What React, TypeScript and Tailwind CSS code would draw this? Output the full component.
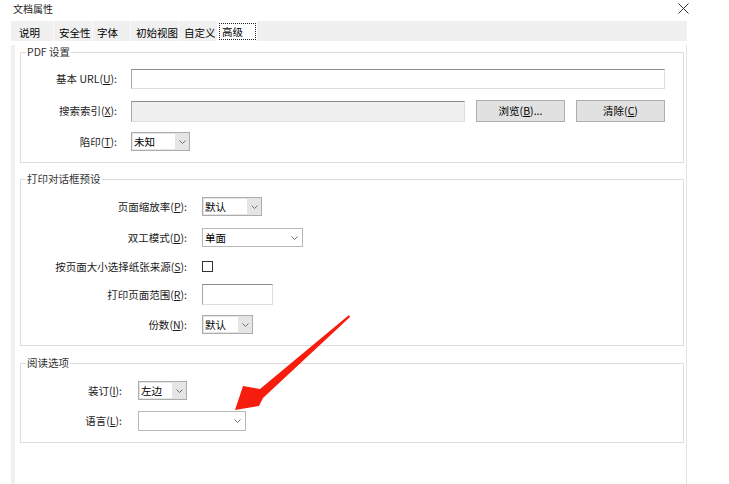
import React from "react";

const font = "font-['Noto_Sans_CJK_SC','Noto_Sans',sans-serif]";

const Chevron = () => (
  <svg width="7" height="4" viewBox="0 0 7 4" className="block">
    <path d="M0.5 0.5 L3.5 3.5 L6.5 0.5" fill="none" stroke="#707070" strokeWidth="1" />
  </svg>
);

const U = ({ c }: { c: string }) => <span className="underline underline-offset-[1px]">{c}</span>;

const Label = ({ text, k, w }: { text: string; k: string; w: string }) => (
  <div className={`${w} shrink-0 text-right text-[10.5px] leading-[14px] text-[#1a1a1a] whitespace-nowrap`}>
    {text}(<U c={k} />):
  </div>
);

const GreySelect = ({ text, cls }: { text: string; cls: string }) => (
  <div className={`${cls} flex h-[19px] border border-[#adadad] bg-[#e5e5e5]`}>
    <div className="flex-1 bg-white m-[1px] mr-0 pl-[1px] text-[10.5px] leading-[15px] text-black">{text}</div>
    <div className="w-[14px] flex items-center justify-center">
      <Chevron />
    </div>
  </div>
);

const WhiteSelect = ({ text, cls }: { text: string; cls: string }) => (
  <div className={`${cls} flex h-[19px] border border-[#b8b8b8] bg-white`}>
    <div className="flex-1 pl-[2px] text-[10.5px] leading-[17px] text-black">{text}</div>
    <div className="w-[15px] flex items-center justify-center">
      <Chevron />
    </div>
  </div>
);

const Input = ({ cls }: { cls: string }) => (
  <div className={`${cls} border border-[#dedede] border-t-[#8a8a8a] border-l-[#a8a8a8]`} />
);

const Btn = ({ text, k }: { text: string; k: string }) => (
  <div className="w-[89px] h-[22px] ml-[11px] border border-[#adadad] bg-[#e1e1e1] flex items-center justify-center text-[10.5px] leading-[14px] text-black">
    {text}(<U c={k} />){k === "B" ? "..." : ""}
  </div>
);

const Group = ({ title, children, cls }: { title: string; children: React.ReactNode; cls: string }) => (
  <fieldset className={`${cls} w-[664px] border border-[#dcdcdc] pb-[11px]`}>
    <legend className="ml-[5px] px-[1px] text-[10.5px] leading-[14px] text-[#333]">{title}</legend>
    {children}
  </fieldset>
);

export default function App() {
  const tabs = [
    { t: "说明", w: "w-[42px]", p: "pl-[8px]" },
    { t: "安全性", w: "w-[39px]", p: "pl-[5px]" },
    { t: "字体", w: "w-[38px]", p: "pl-[4px]" },
    { t: "初始视图", w: "w-[48px]", p: "pl-[5px]" },
    { t: "自定义", w: "w-[39px]", p: "pl-[5px]" },
  ];
  return (
    <div className={`${font} relative w-[729px] h-[484px] bg-white overflow-hidden`}>
      {/* title */}
      <div className="h-[21px] flex items-start justify-between pl-[13px] pr-[40px]">
        <div className="text-[10px] leading-[17px] text-[#1a1a1a]">文档属性</div>
        <svg width="11" height="11" viewBox="0 0 11 11" className="mt-[3px]">
          <path d="M0.5 0.5 L10.5 10.5 M10.5 0.5 L0.5 10.5" stroke="#333" strokeWidth="1" />
        </svg>
      </div>

      <div className="ml-[11px] w-[676px]">
        {/* tab strip */}
        <div className="h-[20px] bg-[#f0f0f0] flex">
          {tabs.map((tb, i) => (
            <div
              key={tb.t}
              className={`${tb.w} ${tb.p} h-full flex items-center pt-[3px] text-[10.5px] leading-[14px] text-black ${i > 0 ? "border-l border-[#fbfbfb]" : ""}`}
            >
              {tb.t}
            </div>
          ))}
          <div className="w-[40px] h-[21px] bg-white pl-[2px] pt-[2px]">
            <div className="w-[37px] h-[17px] border border-dotted border-[#222] pl-[2px] text-[10.5px] leading-[16px] text-black">
              高级
            </div>
          </div>
        </div>

        {/* body */}
        <div className="h-[443px] border-l-[4px] border-l-[#f0f0f0] border-r border-r-[#e3e3e3] pl-[5px]">
          <Group title="PDF 设置" cls="mt-[4px]">
            <div className="flex items-center mt-[10px] h-[20px]">
              <div className="w-[96px] shrink-0 text-right text-[10.5px] leading-[14px] text-[#1a1a1a] whitespace-nowrap">
                基本 URL(<U c="U" />):
              </div>
              <Input cls="ml-[14px] w-[534px] h-[20px] bg-white" />
            </div>
            <div className="flex items-center mt-[11px] h-[22px]">
              <Label text="搜索索引" k="X" w="w-[96px]" />
              <Input cls="ml-[14px] w-[334px] h-[21px] bg-[#f0f0f0]" />
              <Btn text="浏览" k="B" />
              <Btn text="清除" k="C" />
            </div>
            <div className="flex items-center mt-[10px] h-[19px]">
              <Label text="陷印" k="T" w="w-[96px]" />
              <GreySelect text="未知" cls="ml-[14px] w-[59px]" />
            </div>
          </Group>

          <Group title="打印对话框预设" cls="mt-[9px]">
            <div className="flex items-center mt-[11px] h-[19px]">
              <Label text="页面缩放率" k="P" w="w-[166px]" />
              <GreySelect text="默认" cls="ml-[15px] w-[60px]" />
            </div>
            <div className="flex items-center mt-[12px] h-[19px]">
              <Label text="双工模式" k="D" w="w-[166px]" />
              <WhiteSelect text="单面" cls="ml-[15px] w-[101px]" />
            </div>
            <div className="flex items-center mt-[13px] h-[13px]">
              <Label text="按页面大小选择纸张来源" k="S" w="w-[166px]" />
              <div className="ml-[15px] w-[11px] h-[11px] border border-[#333] bg-white" />
            </div>
            <div className="flex items-center mt-[11px] h-[21px]">
              <Label text="打印页面范围" k="R" w="w-[166px]" />
              <Input cls="ml-[15px] w-[71px] h-[21px] bg-white" />
            </div>
            <div className="flex items-center mt-[10px] h-[19px]">
              <Label text="份数" k="N" w="w-[166px]" />
              <GreySelect text="默认" cls="ml-[15px] w-[51px]" />
            </div>
          </Group>

          <Group title="阅读选项" cls="mt-[10px]">
            <div className="flex items-center mt-[11px] h-[19px]">
              <Label text="装订" k="I" w="w-[101px]" />
              <GreySelect text="左边" cls="ml-[16px] w-[49px]" />
            </div>
            <div className="flex items-center mt-[11px] h-[20px]">
              <Label text="语言" k="L" w="w-[101px]" />
              <WhiteSelect text="" cls="ml-[16px] w-[108px] h-[20px]" />
            </div>
          </Group>
        </div>
      </div>

      {/* red arrow annotation */}
      <svg className="absolute left-0 top-0 pointer-events-none" width="729" height="484" viewBox="0 0 729 484">
        <polygon
          points="349,315 260,389 243,386 235,410 259,406 263,398 350,317"
          fill="#f61c0e"
        />
      </svg>
    </div>
  );
}
